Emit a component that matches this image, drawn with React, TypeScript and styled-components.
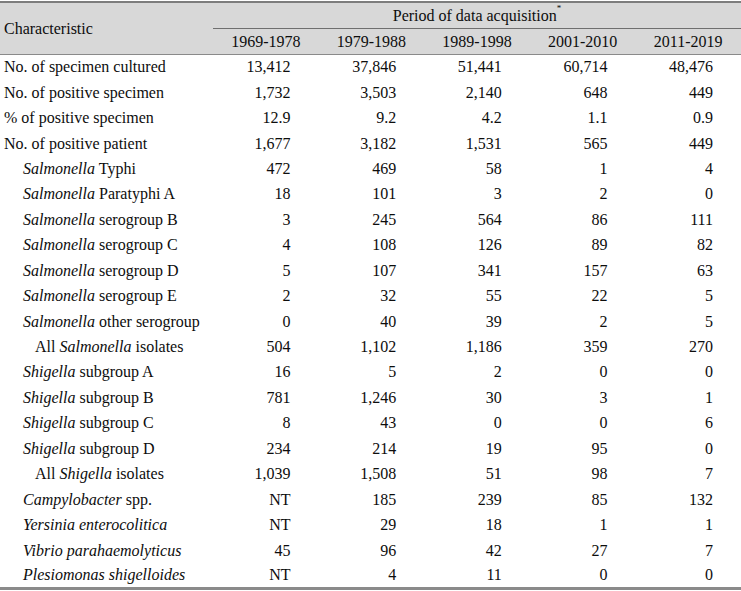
import React from "react";
import styled, { createGlobalStyle } from "styled-components";

const Global = createGlobalStyle`
  html, body { margin: 0; padding: 0; background: #ffffff; }
  body { font-family: "Liberation Serif", "Times New Roman", serif; color: #0d0d0d; }
`;

const Table = styled.table`
  width: 741px;
  border-collapse: collapse;
  table-layout: fixed;
  margin-top: 1px;
  font-size: 16px;
  line-height: 20px;
  border-top: 2px solid #7d7d7d;
  border-bottom: 3px solid #8a8a8a;
`;

const Head = styled.thead`
  background: #d8d8d8;
  border-bottom: 1px solid #8a8a8a;
`;

const Th = styled.th<{ $align?: string; $line?: boolean }>`
  font-weight: normal;
  height: 25px;
  padding: 0 4px;
  text-align: ${(p) => p.$align || "center"};
  vertical-align: middle;
  border-bottom: ${(p) => (p.$line ? "1px solid #6f6f6f" : "none")};
`;

const Sup = styled.sup`
  font-size: 9px;
  vertical-align: top;
  line-height: 9px;
  position: relative;
  top: -2px;
`;

const Row = styled.tr`
  height: 25.45px;
`;

const Label = styled.td<{ $indent: number }>`
  padding: 0 0 0 ${(p) => 4 + p.$indent}px;
  white-space: nowrap;
`;

const Num = styled.td`
  text-align: right;
  padding: 0 28px 0 0;
  white-space: nowrap;
`;

type R = { label: React.ReactNode; indent: number; v: string[] };

const S = (rest: string) => (
  <>
    <i>Salmonella</i> {rest}
  </>
);
const G = (rest: string) => (
  <>
    <i>Shigella</i> {rest}
  </>
);

const rows: R[] = [
  { label: "No. of specimen cultured", indent: 0, v: ["13,412", "37,846", "51,441", "60,714", "48,476"] },
  { label: "No. of positive specimen", indent: 0, v: ["1,732", "3,503", "2,140", "648", "449"] },
  { label: "% of positive specimen", indent: 0, v: ["12.9", "9.2", "4.2", "1.1", "0.9"] },
  { label: "No. of positive patient", indent: 0, v: ["1,677", "3,182", "1,531", "565", "449"] },
  { label: S("Typhi"), indent: 19, v: ["472", "469", "58", "1", "4"] },
  { label: S("Paratyphi A"), indent: 19, v: ["18", "101", "3", "2", "0"] },
  { label: S("serogroup B"), indent: 19, v: ["3", "245", "564", "86", "111"] },
  { label: S("serogroup C"), indent: 19, v: ["4", "108", "126", "89", "82"] },
  { label: S("serogroup D"), indent: 19, v: ["5", "107", "341", "157", "63"] },
  { label: S("serogroup E"), indent: 19, v: ["2", "32", "55", "22", "5"] },
  { label: S("other serogroup"), indent: 19, v: ["0", "40", "39", "2", "5"] },
  {
    label: (
      <>
        All <i>Salmonella</i> isolates
      </>
    ),
    indent: 31,
    v: ["504", "1,102", "1,186", "359", "270"],
  },
  { label: G("subgroup A"), indent: 19, v: ["16", "5", "2", "0", "0"] },
  { label: G("subgroup B"), indent: 19, v: ["781", "1,246", "30", "3", "1"] },
  { label: G("subgroup C"), indent: 19, v: ["8", "43", "0", "0", "6"] },
  { label: G("subgroup D"), indent: 19, v: ["234", "214", "19", "95", "0"] },
  {
    label: (
      <>
        All <i>Shigella</i> isolates
      </>
    ),
    indent: 31,
    v: ["1,039", "1,508", "51", "98", "7"],
  },
  {
    label: (
      <>
        <i>Campylobacter</i> spp.
      </>
    ),
    indent: 19,
    v: ["NT", "185", "239", "85", "132"],
  },
  { label: <i>Yersinia enterocolitica</i>, indent: 19, v: ["NT", "29", "18", "1", "1"] },
  { label: <i>Vibrio parahaemolyticus</i>, indent: 19, v: ["45", "96", "42", "27", "7"] },
  { label: <i>Plesiomonas shigelloides</i>, indent: 19, v: ["NT", "4", "11", "0", "0"] },
];

const periods = ["1969-1978", "1979-1988", "1989-1998", "2001-2010", "2011-2019"];

export default function App() {
  return (
    <>
      <Global />
      <Table>
        <colgroup>
          <col style={{ width: 213 }} />
          {periods.map((p) => (
            <col key={p} />
          ))}
        </colgroup>
        <Head>
          <tr>
            <Th rowSpan={2} $align="left">
              Characteristic
            </Th>
            <Th colSpan={5} $line>
              Period of data acquisition<Sup>*</Sup>
            </Th>
          </tr>
          <tr>
            {periods.map((p) => (
              <Th key={p}>{p}</Th>
            ))}
          </tr>
        </Head>
        <tbody>
          {rows.map((r, i) => (
            <Row key={i}>
              <Label $indent={r.indent}>{r.label}</Label>
              {r.v.map((x, j) => (
                <Num key={j}>{x}</Num>
              ))}
            </Row>
          ))}
        </tbody>
      </Table>
    </>
  );
}
